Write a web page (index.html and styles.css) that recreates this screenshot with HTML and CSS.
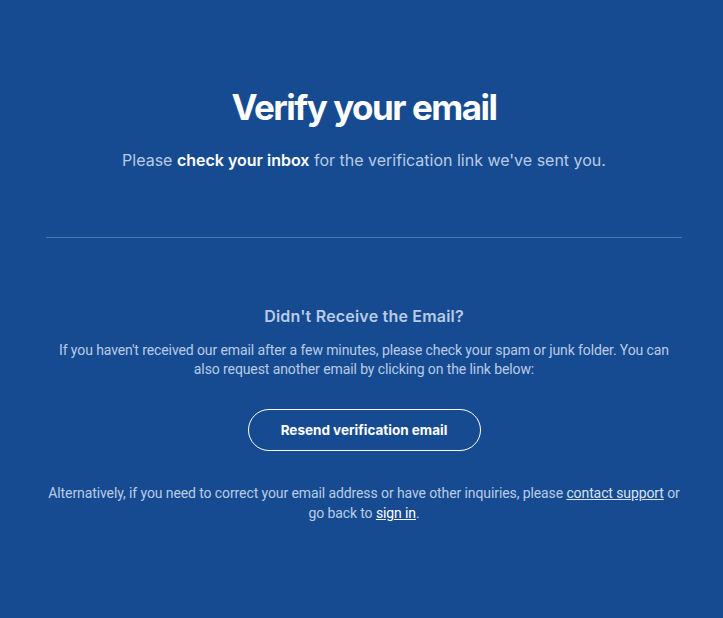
FILE: index.html
```html
<!DOCTYPE html>
<html>
<head>
<meta charset="utf-8">
<link rel="stylesheet" href="styles.css">
</head>
<body>
<main class="page">
  <section class="hero">
    <h1 class="title">Verify your email</h1>
    <p class="lead">Please <strong>check your inbox</strong> for the verification link we've sent you.</p>
  </section>
  <hr class="divider">
  <section class="help">
    <h2 class="help-title">Didn't Receive the Email?</h2>
    <p class="help-text">If you haven't received our email after a few minutes, please check your spam or junk folder. You can also request another email by clicking on the link below:</p>
    <button class="resend" type="button">Resend verification email</button>
    <p class="help-text alt">Alternatively, if you need to correct your email address or have other inquiries, please <a href="#" class="link">contact support</a> or go back to <a href="#" class="link strong">sign in</a>.</p>
  </section>
</main>
</body>
</html>
```
FILE: styles.css
```css
html, body {
  margin: 0;
  padding: 0;
  background: #174b91;
  height: 100%;
}
body {
  font-family: Roboto, "Liberation Sans", sans-serif;
  color: #b9cbe6;
}
.page {
  padding: 0 41px 0 46px;
  display: flex;
  flex-direction: column;
}
.hero {
  display: flex;
  flex-direction: column;
  align-items: center;
  padding-top: 85px;
}
.title {
  margin: 0;
  font-family: Inter, "Noto Sans", sans-serif;
  font-weight: 700;
  font-size: 35px;
  line-height: 44px;
  letter-spacing: -1.5px;
  color: #ffffff;
}
.lead {
  margin: 21px 0 0;
  font-family: Inter, "Noto Sans", sans-serif;
  font-size: 16px;
  line-height: 20px;
  letter-spacing: 0;
  color: #b9cbe6;
}
.lead strong {
  color: #ffffff;
  font-weight: 600;
}
.divider {
  margin: 67px 0 0;
  border: 0;
  height: 1px;
  background: #4a76b4;
}
.help {
  display: flex;
  flex-direction: column;
  align-items: center;
  text-align: center;
}
.help-title {
  margin: 67px 0 0;
  font-family: Inter, "Noto Sans", sans-serif;
  font-size: 16px;
  font-weight: 600;
  line-height: 22px;
  letter-spacing: 0.2px;
  color: #b9cbe6;
}
.help-text {
  margin: 14px 0 0;
  font-size: 14px;
  line-height: 19px;
  letter-spacing: -0.1px;
  max-width: 625px;
}
.resend {
  margin-top: 30px;
  width: 233px;
  height: 42px;
  border: 1px solid #ffffff;
  border-radius: 21px;
  background: transparent;
  color: #ffffff;
  font-family: Inter, "Noto Sans", sans-serif;
  font-weight: 700;
  font-size: 13.5px;
  letter-spacing: 0;
  cursor: pointer;
}
.help-text.alt {
  margin-top: 32px;
  line-height: 20px;
  max-width: 645px;
}
.link {
  color: #d6e2f2;
  text-decoration: underline;
}
.link.strong {
  color: #ffffff;
}
```
